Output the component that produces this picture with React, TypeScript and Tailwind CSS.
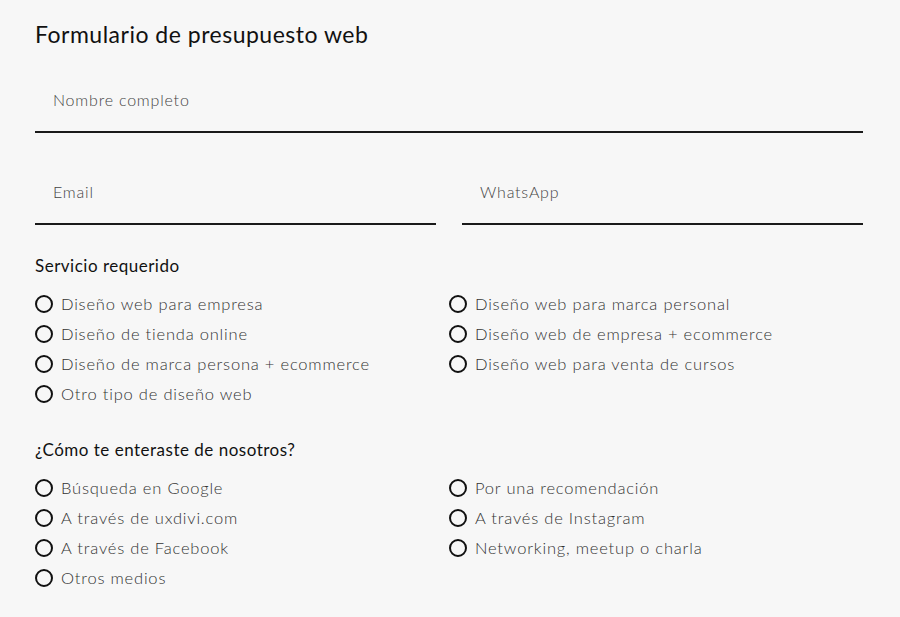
import React from "react";

const font = { fontFamily: "Lato, 'Noto Sans', sans-serif" };

function Radio({ label }: { label: string }) {
  return (
    <label className="flex items-center h-[30px] gap-[8px]">
      <span className="w-[18px] h-[18px] rounded-full border-2 border-[#111] shrink-0" />
      <span className="text-[16.5px] font-light text-[#333] tracking-[0.8px]">{label}</span>
    </label>
  );
}

function Field({ label }: { label: string }) {
  return (
    <div className="flex-1 border-b-2 border-[#1a1a1a] pb-[19px] pl-[18px]">
      <span className="block text-[16px] leading-[24px] font-light text-[#444] tracking-[0.8px]">{label}</span>
    </div>
  );
}

export default function App() {
  return (
    <div className="w-[900px] h-[617px] bg-[#f7f7f7] pl-[35px] pr-[37px] pt-[20px] text-[#111]" style={font}>
      <h1 className="text-[23px] leading-[28px] tracking-[0.5px]">Formulario de presupuesto web</h1>
      <div className="mt-[40px] flex">
        <Field label="Nombre completo" />
      </div>
      <div className="mt-[47px] flex gap-[26px]">
        <Field label="Email" />
        <Field label="WhatsApp" />
      </div>
      <div className="mt-[29px] text-[17px] leading-[24px] tracking-[0.5px]">Servicio requerido</div>
      <div className="mt-[11px] grid grid-cols-2">
        <div className="flex flex-col">
          <Radio label="Diseño web para empresa" />
          <Radio label="Diseño de tienda online" />
          <Radio label="Diseño de marca persona + ecommerce" />
          <Radio label="Otro tipo de diseño web" />
        </div>
        <div className="flex flex-col">
          <Radio label="Diseño web para marca personal" />
          <Radio label="Diseño web de empresa + ecommerce" />
          <Radio label="Diseño web para venta de cursos" />
        </div>
      </div>
      <div className="mt-[29px] text-[17px] leading-[24px] tracking-[0.5px]">¿Cómo te enteraste de nosotros?</div>
      <div className="mt-[11px] grid grid-cols-2">
        <div className="flex flex-col">
          <Radio label="Búsqueda en Google" />
          <Radio label="A través de uxdivi.com" />
          <Radio label="A través de Facebook" />
          <Radio label="Otros medios" />
        </div>
        <div className="flex flex-col">
          <Radio label="Por una recomendación" />
          <Radio label="A través de Instagram" />
          <Radio label="Networking, meetup o charla" />
        </div>
      </div>
    </div>
  );
}
